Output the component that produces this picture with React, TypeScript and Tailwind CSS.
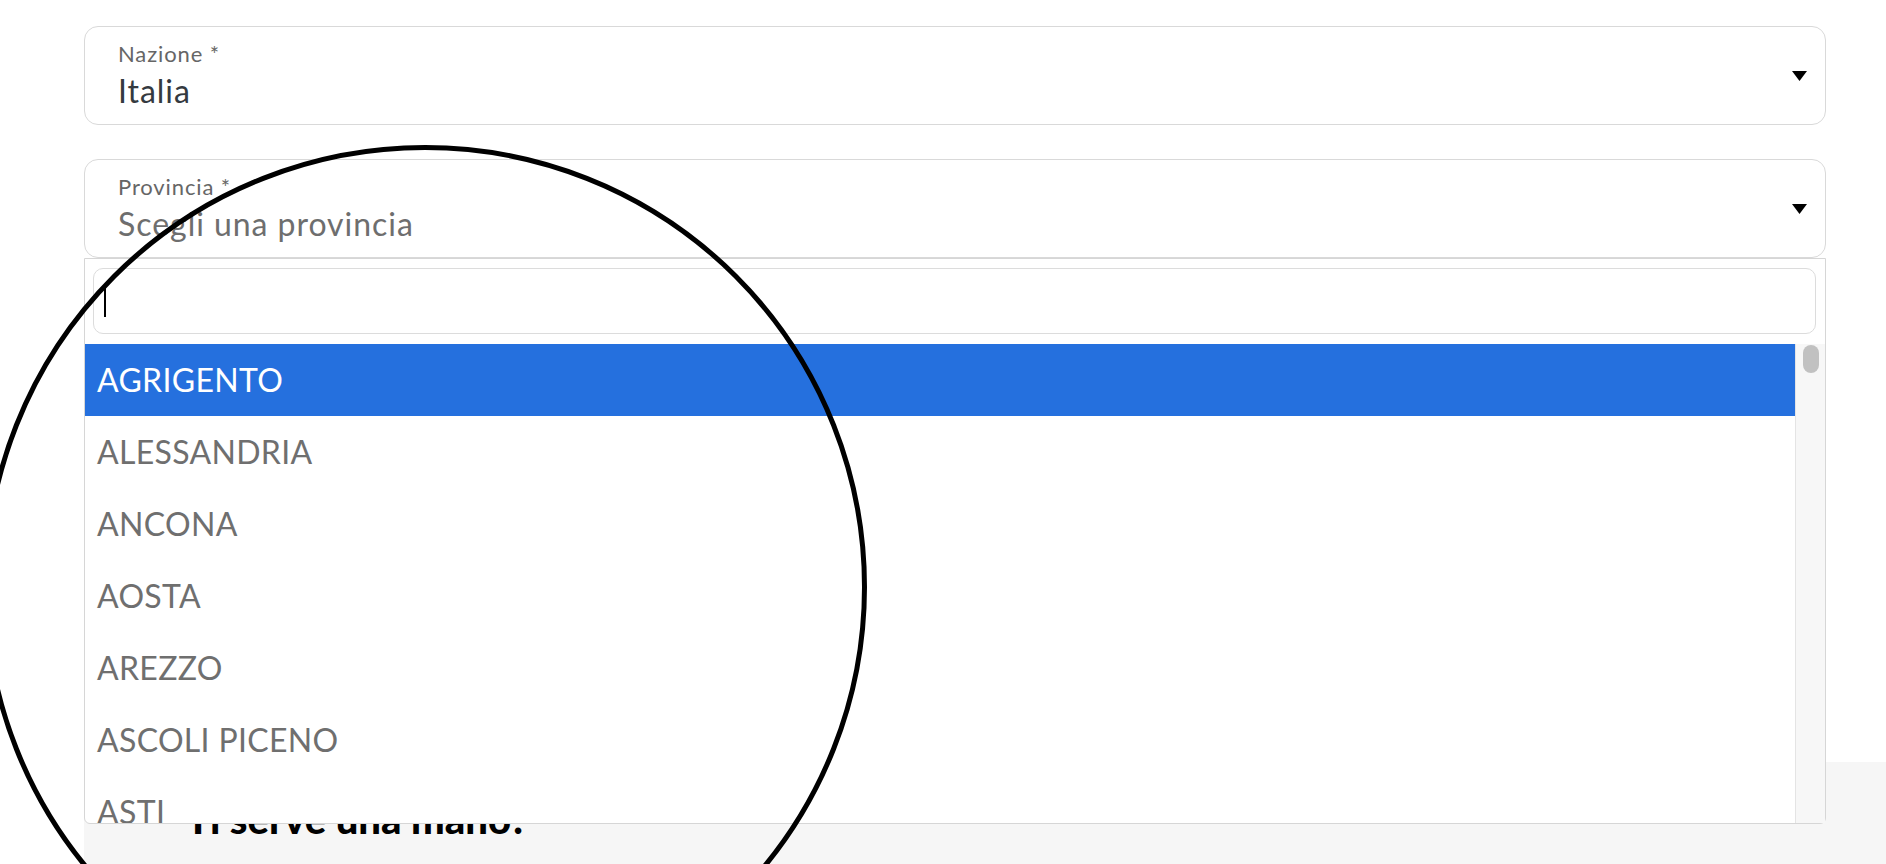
import React from 'react'

const province = ['AGRIGENTO', 'ALESSANDRIA', 'ANCONA', 'AOSTA', 'AREZZO', 'ASCOLI PICENO', 'ASTI', 'AVELLINO']

function Caret() {
  return (
    <svg width="15" height="10" viewBox="0 0 15 10" className="shrink-0">
      <polygon points="0,0 15,0 7.5,10" fill="#000" />
    </svg>
  )
}

function SelectBox({ label, value, placeholder }: { label: string; value: string; placeholder?: boolean }) {
  return (
    <div className="flex h-[99px] items-center justify-between rounded-[14px] border border-[#d9d9d9] bg-white pl-[33px] pr-[18px]">
      <div className="flex flex-col pb-[2px]">
        <span className="text-[22px] leading-[20px] tracking-[0.04em] text-[#666]">{label}</span>
        <span
          className={`mt-[11px] text-[32px] leading-[31px] tracking-[0.03em] ${
            placeholder ? 'text-[#6e6e6e]' : 'text-[#343a40]'
          }`}
        >
          {value}
        </span>
      </div>
      <Caret />
    </div>
  )
}

export default function App() {
  return (
    <div className="relative h-[864px] w-[1886px] overflow-hidden bg-white font-['Lato',sans-serif]">
      <div className="ml-[84px] flex w-[1742px] flex-col gap-[34px] pt-[26px]">
        <SelectBox label="Nazione *" value="Italia" />
        <div className="relative z-10">
          <SelectBox label="Provincia *" value="Scegli una provincia" placeholder />

          {/* dropdown aperto */}
          <div className="absolute left-0 right-0 top-[99px] flex flex-col rounded-b-[6px] border border-[#d6d6d6] bg-white pt-[9px]">
            <div className="ml-[8px] mr-[9px] flex h-[66px] items-center rounded-[10px] border border-[#dcdcdc] px-[10px]">
              <div className="h-[32px] w-[2px] bg-black" />
            </div>
            <div className="mt-[10px] flex h-[479px] overflow-hidden">
              <ul className="flex-1">
                {province.map((p, i) => (
                  <li
                    key={p}
                    className={`flex h-[72px] items-center pl-[12px] text-[32px] leading-none tracking-[0.01em] ${
                      i === 0 ? 'bg-[#2570de] text-white' : 'text-[#6f6f6f]'
                    }`}
                  >
                    {p}
                  </li>
                ))}
              </ul>
              <div className="w-[30px] border-l border-[#e4e4e4] bg-[#f7f7f7] pl-[7px]">
                <div className="mt-[1px] h-[28px] w-[16px] rounded-full bg-[#c1c1c1]" />
              </div>
            </div>
          </div>
        </div>
      </div>

      <div className="h-[504px]" />

      <section className="ml-[84px] h-[300px] bg-[#f6f6f6] pl-[102px] pt-[37px]">
        <h2 className="text-[40px] font-black leading-none text-black">Ti serve una mano?</h2>
      </section>

      {/* cerchio di evidenziazione */}
      <div className="pointer-events-none absolute left-[-17px] top-[145px] z-20 h-[884px] w-[884px] rounded-full border-[5px] border-black" />
    </div>
  )
}
